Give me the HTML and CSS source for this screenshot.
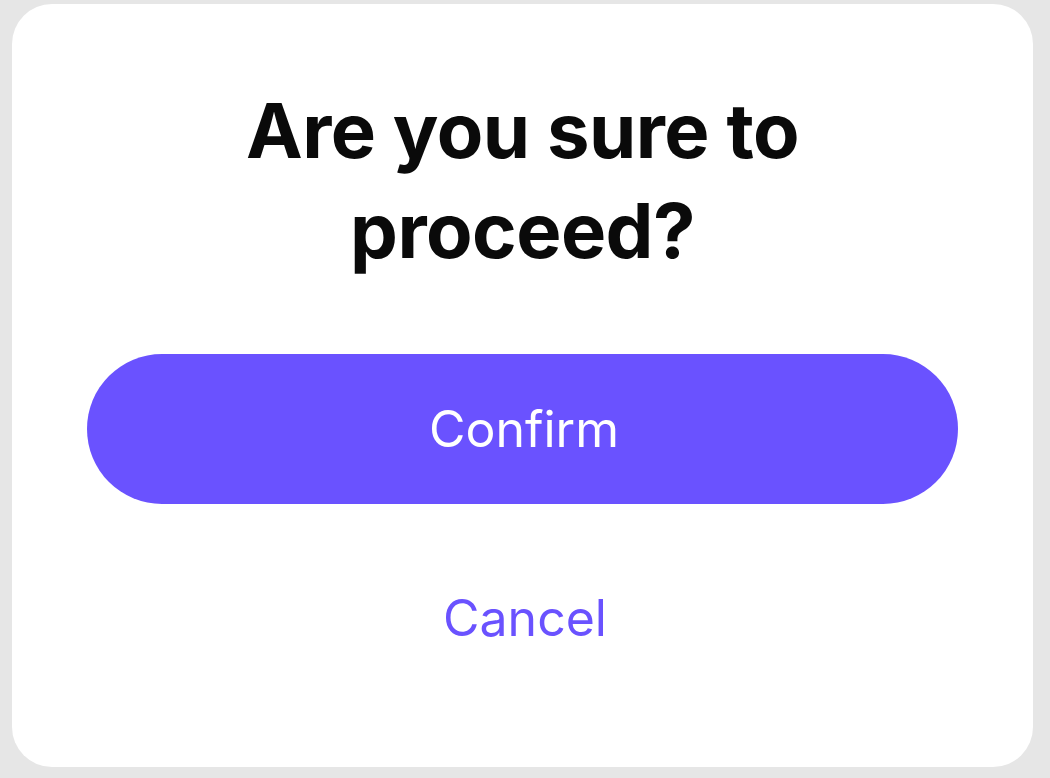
FILE: index.html
```html
<!DOCTYPE html>
<html lang="en">
<head>
<meta charset="utf-8">
<title>Confirm</title>
<link rel="stylesheet" href="styles.css">
</head>
<body>
<div class="card">
  <h1 class="title">Are you sure to<br>proceed?</h1>
  <button class="btn-confirm">Confirm</button>
  <button class="btn-cancel">Cancel</button>
</div>
</body>
</html>
```
FILE: styles.css
```css
html, body {
  margin: 0;
  height: 100%;
}
body {
  background: #e6e6e6;
  padding: 4px 17px 11px 12px;
  box-sizing: border-box;
  font-family: Inter, "Noto Sans", sans-serif;
}
.card {
  background: #ffffff;
  border-radius: 40px;
  height: 100%;
  box-sizing: border-box;
  padding: 76px 75px 0 75px;
  display: flex;
  flex-direction: column;
  align-items: center;
}
.title {
  margin: 0;
  font-size: 76px;
  line-height: 100px;
  font-weight: 700;
  color: #0a0a0a;
  text-align: center;
  letter-spacing: -0.55px;
}
.btn-confirm {
  margin-top: 74px;
  width: 100%;
  height: 150px;
  border: none;
  border-radius: 75px;
  background: #6a52ff;
  color: #ffffff;
  font-family: Inter, "Noto Sans", sans-serif;
  font-size: 50px;
  font-weight: 400;
  padding: 0 0 0 3px;
  cursor: pointer;
}
.btn-cancel {
  margin-top: 84px;
  padding: 0 0 0 5px;
  border: none;
  background: none;
  color: #6a52ff;
  font-family: Inter, "Noto Sans", sans-serif;
  font-size: 50px;
  line-height: 60px;
  font-weight: 400;
  cursor: pointer;
}
```
